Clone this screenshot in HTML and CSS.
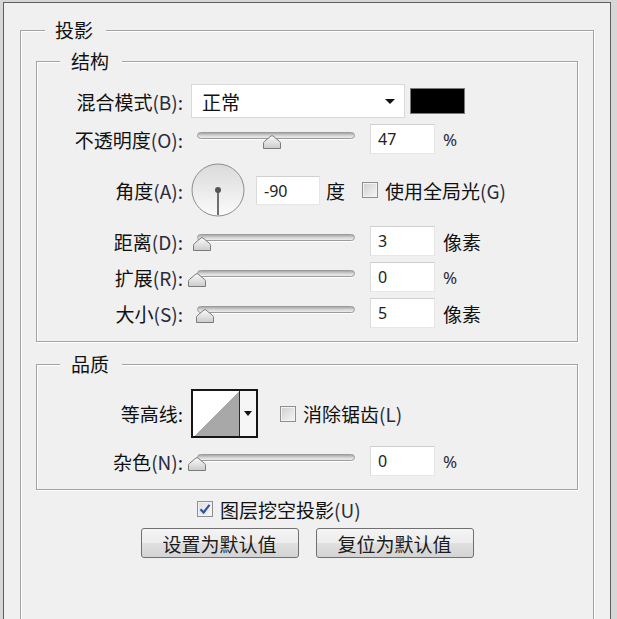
FILE: index.html
```html
<!DOCTYPE html>
<html lang="zh-CN">
<head>
  <meta charset="UTF-8" />
  <meta name="viewport" content="width=device-width, initial-scale=1" />
  <title>投影</title>
  <link rel="stylesheet" href="styles.css">
</head>
<body>

<svg class="defs" width="0" height="0" aria-hidden="true">
  <defs>
    <linearGradient id="tg" x1="0" y1="0" x2="0" y2="1">
      <stop offset="0" stop-color="#fbfbfb"/>
      <stop offset="1" stop-color="#cbcbcb"/>
    </linearGradient>
    <linearGradient id="dg" x1="0" y1="0" x2="0" y2="1">
      <stop offset="0" stop-color="#dadada"/>
      <stop offset="1" stop-color="#fbfbfb"/>
    </linearGradient>
    <symbol id="thumb" viewBox="0 0 20 15">
      <path d="M1.5 14.5V9.2Q1.5 8.2 2.4 7.5L9 2Q10 1.2 11 2L17.6 7.5Q18.5 8.2 18.5 9.2V14.5Z" fill="url(#tg)" stroke="#7b7b7b"/>
    </symbol>
  </defs>
</svg>

<div class="dialog">
  <fieldset class="group outer">
    <legend>投影</legend>

    <fieldset class="group inner">
      <legend>结构</legend>
      <div class="rows">
        <div class="row row-blend">
          <label class="lbl">混合模式<span class="key">(B):</span></label>
          <div class="select"><span>正常</span><i class="caret"></i></div>
          <div class="swatch"></div>
        </div>

        <div class="row">
          <label class="lbl">不透明度<span class="key">(O):</span></label>
          <div class="slider"><div class="track"></div><svg class="thumb" style="left:71px"><use href="#thumb"/></svg></div>
          <div class="field">47</div>
          <span class="unit pct">%</span>
        </div>

        <div class="row row-angle">
          <label class="lbl">角度<span class="key">(A):</span></label>
          <svg class="dial" width="54" height="54" viewBox="0 0 54 54">
            <circle cx="27" cy="27" r="26" fill="url(#dg)" stroke="#8d8d8d"/>
            <line x1="27" y1="27" x2="27" y2="52" stroke="#707070" stroke-width="2"/>
            <circle cx="27" cy="27" r="3" fill="#555"/>
          </svg>
          <div class="field field-angle">-90</div>
          <span class="unit deg">度</span>
          <span class="cb cb-global"></span>
          <span class="cb-text">使用全局光<span class="key">(G)</span></span>
        </div>

        <div class="row">
          <label class="lbl">距离<span class="key">(D):</span></label>
          <div class="slider"><div class="track"></div><svg class="thumb" style="left:1px"><use href="#thumb"/></svg></div>
          <div class="field">3</div>
          <span class="unit">像素</span>
        </div>

        <div class="row">
          <label class="lbl">扩展<span class="key">(R):</span></label>
          <div class="slider"><div class="track"></div><svg class="thumb" style="left:-4px"><use href="#thumb"/></svg></div>
          <div class="field">0</div>
          <span class="unit pct">%</span>
        </div>

        <div class="row">
          <label class="lbl">大小<span class="key">(S):</span></label>
          <div class="slider"><div class="track"></div><svg class="thumb" style="left:4px"><use href="#thumb"/></svg></div>
          <div class="field">5</div>
          <span class="unit">像素</span>
        </div>
      </div>
    </fieldset>

    <fieldset class="group inner quality">
      <legend>品质</legend>
      <div class="rows rows-quality">
        <div class="row row-contour">
          <label class="lbl">等高线:</label>
          <div class="contour">
            <div class="curve"></div>
            <div class="contour-drop"><i class="caret caret-small"></i></div>
          </div>
          <span class="cb cb-aa"></span>
          <span class="cb-text">消除锯齿<span class="key">(L)</span></span>
        </div>

        <div class="row">
          <label class="lbl">杂色<span class="key">(N):</span></label>
          <div class="slider"><div class="track"></div><svg class="thumb" style="left:-4px"><use href="#thumb"/></svg></div>
          <div class="field">0</div>
          <span class="unit pct">%</span>
        </div>
      </div>
    </fieldset>

    <div class="knockout">
      <span class="cb checked">
        <svg width="14" height="14" viewBox="0 0 14 14"><path d="M2.5 7.2L5.6 10.5L11.5 2.8" fill="none" stroke="#2f53a8" stroke-width="2.2"/></svg>
      </span>
      <span class="cb-text">图层挖空投影<span class="key">(U)</span></span>
    </div>

    <div class="actions">
      <button class="btn">设置为默认值</button>
      <button class="btn">复位为默认值</button>
    </div>
  </fieldset>
</div>

</body>
</html>
```

FILE: styles.css
```css
* { box-sizing: border-box; }
body {
  margin: 0; height: 619px; overflow: hidden; background: #d7d7d7;
  font-family: "Noto Sans CJK SC", "Noto Sans", sans-serif; font-size: 19px; color: #111;
}
.defs { position: absolute; width: 0; height: 0; }

.dialog {
  margin: 2px 6px 0 3px; height: 617px; overflow: hidden; background: #f0f0f0;
  border: 1px solid #5e5e5e; border-bottom: 0;
}

/* etched group boxes */
.group {
  margin: 0; padding: 0; min-width: 0;
  border: 1px solid #a3a3a3;
  box-shadow: 1px 1px 0 #fff, inset 1px 1px 0 #fff;
}
.group > legend {
  height: 20px; line-height: 20px; background: #f0f0f0;
  margin-left: 23px; padding: 0 13px 0 11px;
}
.outer { margin: 17px 16px 0; height: 620px; }
.outer > legend { margin-left: 24px; padding-left: 10px; }
.inner { margin: 11px 15px 0; padding: 13px 0 13px; }
.quality { margin-top: 12px; padding-top: 15px; }

.rows { display: flex; flex-direction: column; gap: 6px; }
.rows-quality { gap: 8px; }
.row { display: flex; align-items: center; height: 30px; }
.row-blend { height: 34px; }
.row-angle { height: 60px; }
.row-contour { height: 49px; }

.lbl { width: 146px; margin-right: 8px; text-align: right; white-space: nowrap; }
.key { color: #2b2b3b; }

.select {
  width: 214px; height: 34px; background: #fff; border: 1px solid #d9d9d9;
  display: flex; align-items: center; justify-content: space-between; padding: 0 9px 0 10px;
}
.caret {
  width: 0; height: 0;
  border-left: 5px solid transparent; border-right: 5px solid transparent; border-top: 5px solid #111;
}
.caret-small { border-left-width: 4px; border-right-width: 4px; }
.swatch { width: 55px; height: 26px; margin-left: 5px; background: #000; border: 1px solid #7a7a7a; }

.slider { position: relative; width: 179px; height: 30px; flex: none; }
.track {
  width: 158px; height: 7px; margin: 8px 0 0 6px;
  border: 1px solid #9b9b9b; border-radius: 4px;
  background: linear-gradient(#a8a8a8, #dcdcdc 60%, #ebebeb);
  box-shadow: 0 1px 0 #fff;
}
.thumb { position: absolute; top: 10px; width: 20px; height: 15px; }

.field {
  width: 65px; height: 30px; flex: none; background: #fff;
  border: 1px solid #e6e6e6; border-top-color: #cfcfcf; border-left-color: #dadada;
  padding-left: 7px; font-family: "Noto Sans", sans-serif; font-size: 16px; line-height: 28px; color: #222;
}
.field-angle { width: 64px; height: 29px; margin-left: 11px; }
.unit { margin-left: 8px; }
.pct { font-family: "Noto Sans", sans-serif; font-size: 17px; color: #2b2b3b; }
.deg { margin-left: 6px; }

.dial { flex: none; }

.cb {
  display: inline-flex; align-items: center; justify-content: center;
  width: 16px; height: 16px; flex: none;
  border: 1px solid #8e8f8f;
  background: linear-gradient(135deg, #cfcfcf, #f6f6f6);
  box-shadow: inset 0 0 0 1px #f2f2f2;
}
.cb.checked { background: linear-gradient(135deg, #dcdcdc, #fafafa); }
.cb-global { margin-left: 17px; }
.cb-aa { margin-left: 22px; }
.cb-text { margin-left: 7px; white-space: nowrap; }

.contour {
  display: flex; width: 67px; height: 49px; flex: none;
  border: 2px solid #161616; background: #fff;
}
.curve { width: 45px; margin: 1px 0 0 1px; background: linear-gradient(to top left, #a8a8a8 50%, #fff 50%); }
.contour-drop {
  flex: 1; border-left: 1px solid #2a2a2a; background: #f6f6f6;
  display: flex; align-items: center; justify-content: center;
}

.knockout { display: flex; align-items: center; height: 20px; margin-top: 9px; padding-left: 176px; }

.actions { display: flex; justify-content: center; gap: 17px; margin-top: 9px; }
.btn {
  width: 158px; height: 30px; padding: 0;
  font-family: inherit; font-size: 19px; line-height: 1; color: #1b1b1b;
  border: 1px solid #707070; border-radius: 3px;
  background: linear-gradient(#f4f4f4, #ececec 50%, #e0e0e0 51%, #d4d4d4);
}
```
